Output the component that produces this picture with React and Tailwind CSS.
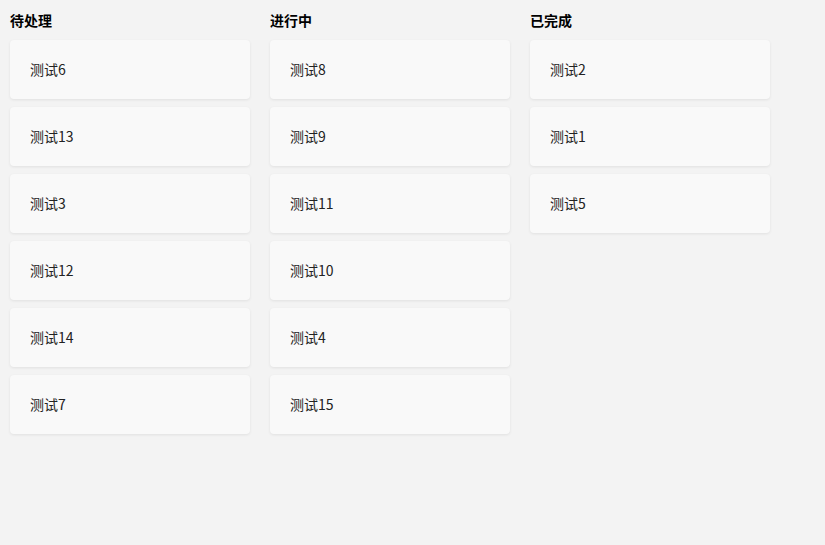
import React from "react";

const columns = [
  { title: "待处理", items: ["测试6", "测试13", "测试3", "测试12", "测试14", "测试7"] },
  { title: "进行中", items: ["测试8", "测试9", "测试11", "测试10", "测试4", "测试15"] },
  { title: "已完成", items: ["测试2", "测试1", "测试5"] },
];

export default function App() {
  return (
    <div
      className="w-[825px] h-[545px] bg-[#f3f3f3] p-[10px] flex gap-5"
      style={{ fontFamily: '"Noto Sans CJK SC", "Noto Sans", sans-serif' }}
    >
      {columns.map((col) => (
        <div key={col.title} className="w-[240px] flex flex-col">
          <div className="text-[14px] font-bold text-black leading-5 h-5 mb-[10px]">{col.title}</div>
          <div className="flex flex-col gap-2">
            {col.items.map((it) => (
              <div
                key={it}
                className="h-[59px] bg-[#f9f9f9] rounded-[4px] shadow-[0_1px_3px_rgba(0,0,0,0.08)] px-5 flex items-center text-[14px] text-[#222]"
              >
                {it}
              </div>
            ))}
          </div>
        </div>
      ))}
    </div>
  );
}
